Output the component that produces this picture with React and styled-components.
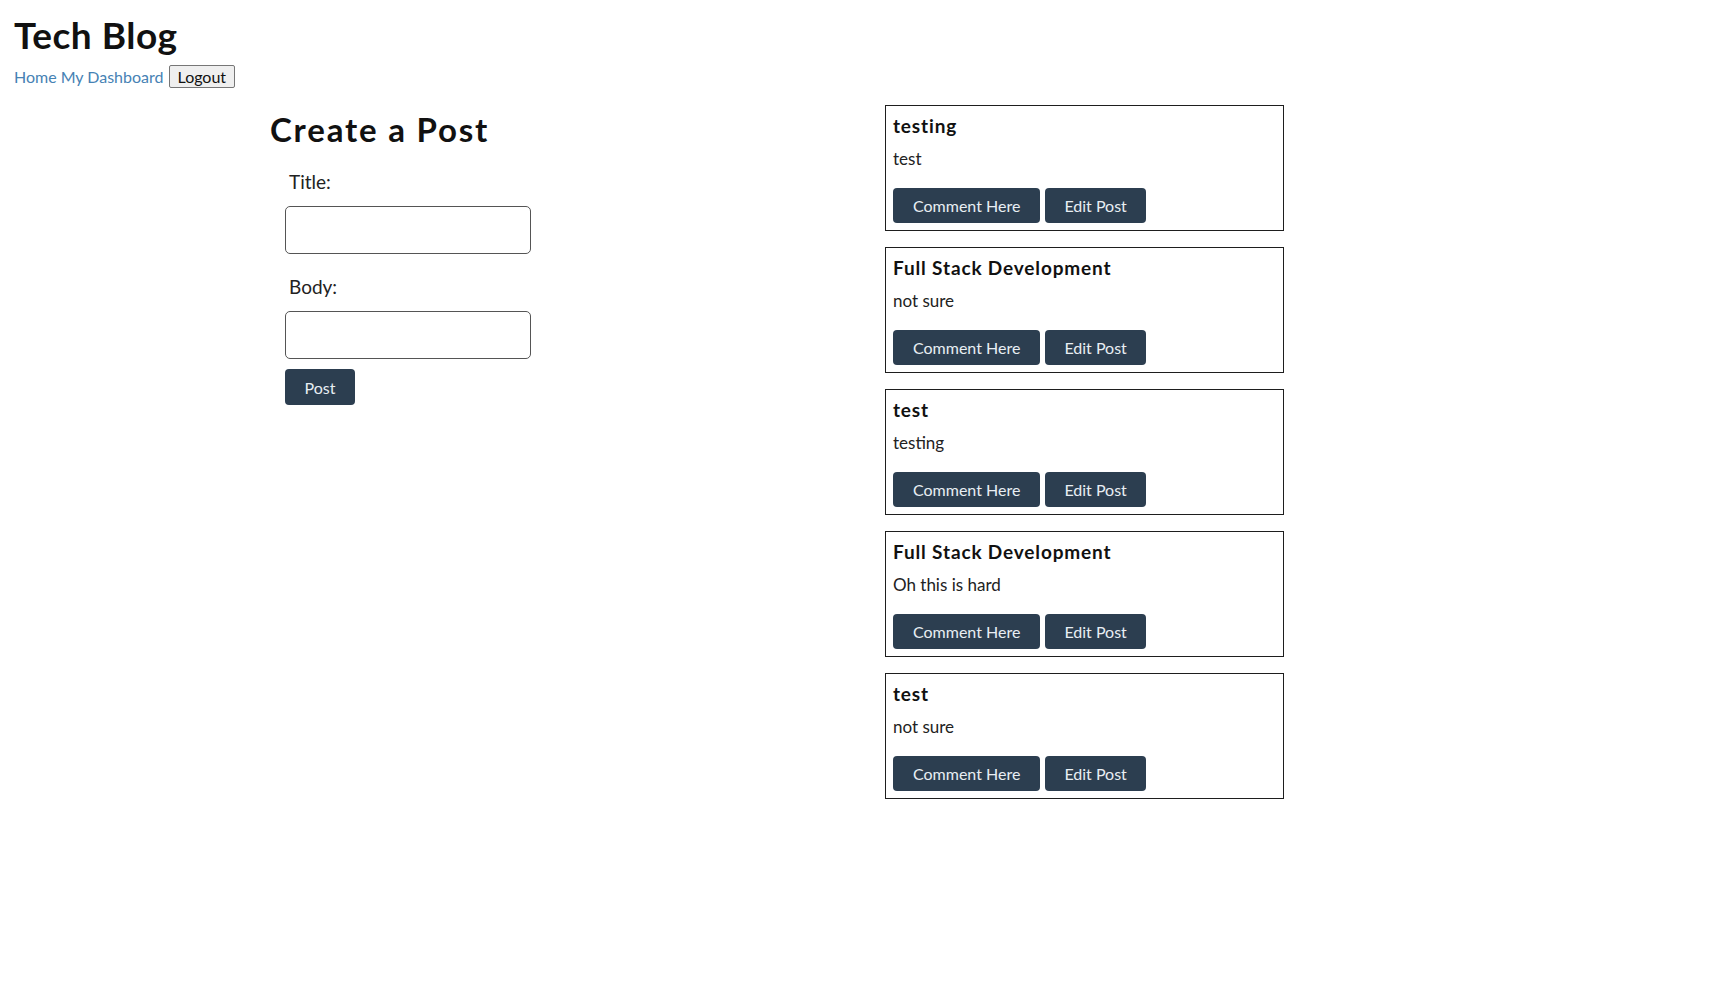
import React from 'react';
import styled, { createGlobalStyle } from 'styled-components';

const GlobalStyle = createGlobalStyle`
  html, body {
    margin: 0;
    padding: 0;
    background: #ffffff;
  }

  body {
    font-family: Lato, "Open Sans", sans-serif;
    color: #151515;
  }
`;

// data
const posts = [
  { id: 1, title: 'testing', body: 'test' },
  { id: 2, title: 'Full Stack Development', body: 'not sure' },
  { id: 3, title: 'test', body: 'testing' },
  { id: 4, title: 'Full Stack Development', body: 'Oh this is hard' },
  { id: 5, title: 'test', body: 'not sure' }
];

// header
const Header = styled.header`
  padding: 13px 0 0 14px;
`;

const SiteTitle = styled.h1`
  margin: 0;
  font-size: 37px;
  line-height: 44px;
  font-weight: 700;
  letter-spacing: 0.5px;
  color: #111;
`;

const Nav = styled.nav`
  display: flex;
  align-items: center;
  gap: 4px;
  margin-top: 8px;
  font-size: 16px;
`;

const NavLink = styled.a`
  color: #4682b4;
  text-decoration: none;
  cursor: pointer;
`;

const LogoutButton = styled.button`
  height: 23px;
  margin-left: 1px;
  padding: 0 8px;
  font-family: inherit;
  font-size: 16px;
  color: #111;
  background: #efefef;
  border: 1px solid #767676;
  border-radius: 2px;
`;

// layout
const Main = styled.main`
  display: flex;
  align-items: flex-start;
  margin-top: 17px;
  padding-left: 270px;
`;

const FormColumn = styled.section`
  width: 615px;
`;

const FormHeading = styled.h2`
  margin: 4px 0 0;
  font-size: 33px;
  line-height: 40px;
  font-weight: 700;
  letter-spacing: 1.8px;
  color: #111;
`;

const PostForm = styled.form`
  display: flex;
  flex-direction: column;
  align-items: flex-start;
  padding-left: 15px;
`;

const Label = styled.label`
  margin: 21px 0 12px;
  padding-left: 4px;
  font-size: 19px;
  line-height: 24px;
  color: #222;
`;

const TextInput = styled.input`
  box-sizing: border-box;
  width: 246px;
  height: 48px;
  border: 1px solid #555;
  border-radius: 5px;
  font-family: inherit;
  font-size: 16px;
`;

const DarkButton = styled.button`
  height: ${({ $h }) => $h || 35}px;
  padding: 0 ${({ $px }) => $px ?? 20}px;
  font-family: inherit;
  font-size: 16px;
  color: #e8eef3;
  background: #2c3e50;
  border: none;
  border-radius: 4px;
  cursor: pointer;
`;

const SubmitButton = styled(DarkButton)`
  width: 70px;
  margin-top: 10px;
`;

// posts
const PostList = styled.section`
  display: flex;
  flex-direction: column;
  gap: 16px;
`;

const PostCard = styled.article`
  box-sizing: border-box;
  width: 399px;
  height: 126px;
  padding: 8px 7px 7px;
  border: 1px solid #1e1e1e;
`;

const PostTitle = styled.h3`
  margin: 0;
  font-size: 19px;
  line-height: 24px;
  font-weight: 700;
  letter-spacing: 0.85px;
  color: #111;
`;

const PostBody = styled.p`
  margin: 10px 0 0;
  font-size: 17px;
  line-height: 22px;
  color: #222;
`;

const Actions = styled.div`
  display: flex;
  gap: 5px;
  margin-top: 18px;
`;

const App = () => (
  <>
    <GlobalStyle />
    <Header>
      <SiteTitle>Tech Blog</SiteTitle>
      <Nav>
        <NavLink>Home</NavLink>
        <NavLink>My Dashboard</NavLink>
        <LogoutButton>Logout</LogoutButton>
      </Nav>
    </Header>
    <Main>
      <FormColumn>
        <FormHeading>Create a Post</FormHeading>
        <PostForm onSubmit={(e) => e.preventDefault()}>
          <Label htmlFor="post-title">Title:</Label>
          <TextInput id="post-title" type="text" />
          <Label htmlFor="post-body">Body:</Label>
          <TextInput id="post-body" type="text" />
          <SubmitButton $h={36} $px={0} type="submit">
            Post
          </SubmitButton>
        </PostForm>
      </FormColumn>
      <PostList>
        {posts.map((post) => (
          <PostCard key={post.id}>
            <PostTitle>{post.title}</PostTitle>
            <PostBody>{post.body}</PostBody>
            <Actions>
              <DarkButton>Comment Here</DarkButton>
              <DarkButton $px={19}>Edit Post</DarkButton>
            </Actions>
          </PostCard>
        ))}
      </PostList>
    </Main>
  </>
);

export default App;
